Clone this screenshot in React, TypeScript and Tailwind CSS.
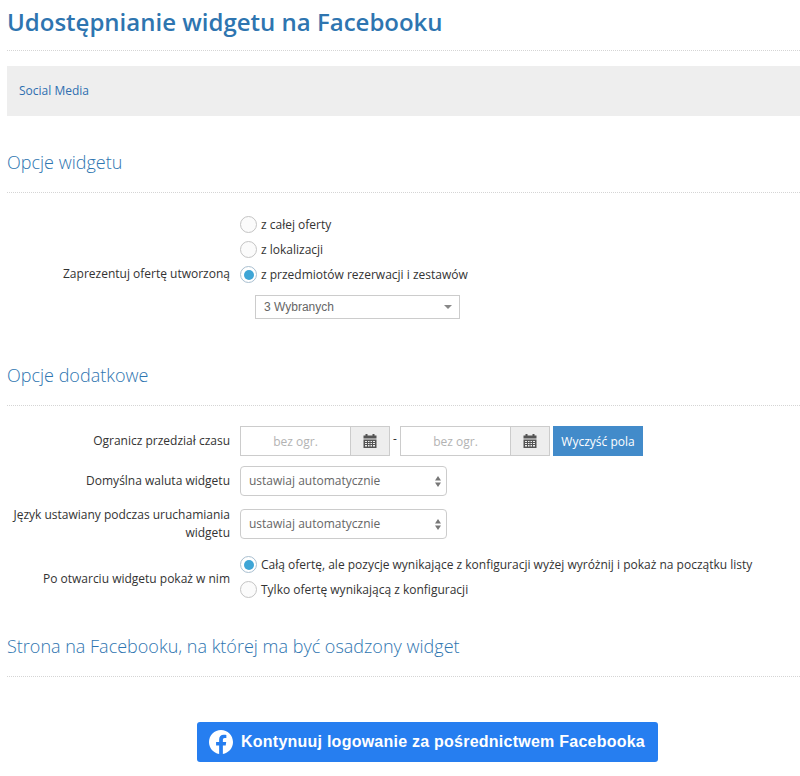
import { FC, ReactNode } from 'react';

const Radio: FC<{ checked?: boolean; label: string }> = ({ checked, label }) => (
  <div className="flex items-center h-[25px]">
    <span className={`w-[17px] h-[17px] rounded-full border flex items-center justify-center shrink-0 ${checked ? 'border-[#a9bfd0] bg-white' : 'border-[#c4c4c4] bg-[#fbfbfb]'}`}>
      {checked && <span className="w-[10px] h-[10px] rounded-full bg-[#3ea5d6]" />}
    </span>
    <span className="ml-[4px] text-[12px] text-[#333] whitespace-nowrap">{label}</span>
  </div>
);

const SectionTitle: FC<{ children: ReactNode }> = ({ children }) => (
  <div className="text-[18px] font-light leading-[24px] text-[#2e75b0] pb-[18px] border-b border-dotted border-[#d5d5d5]">
    {children}
  </div>
);

const CalendarIcon: FC = () => (
  <svg width="14" height="14" viewBox="0 0 14 14" fill="#555">
    <rect x="2.5" y="0" width="2" height="2.5" />
    <rect x="9.5" y="0" width="2" height="2.5" />
    <rect x="0.5" y="1.5" width="13" height="3" />
    <path fillRule="evenodd" d="M0.5 5.5h13V14h-13zM2 7v1h2V7zM5 7v1h1.5V7zM7.5 7v1H9V7zM10 7v1h2V7zM2 9v1h2V9zM5 9v1h1.5V9zM7.5 9v1H9V9zM10 9v1h2V9zM2 11v1.5h2V11zM5 11v1.5h1.5V11zM7.5 11v1.5H9V11zM10 11v1.5h2V11z" />
  </svg>
);

const DateField: FC = () => (
  <div className="flex w-[150px] h-[30px] border border-[#ccc]">
    <div className="flex-1 flex items-center justify-center pt-[2px] text-[12px] text-[#b3b3b3]">bez ogr.</div>
    <div className="w-[39px] bg-[#eee] border-l border-[#ccc] flex items-center justify-center">
      <CalendarIcon />
    </div>
  </div>
);

const NativeSelect: FC = () => (
  <div className="w-[207px] h-[30px] border border-[#ccc] rounded-[4px] pl-[8px] pr-[5px] flex items-center justify-between text-[12px] text-[#666]">
    <span>ustawiaj automatycznie</span>
    <svg width="6" height="11" viewBox="0 0 6 11" fill="#777">
      <path d="M3 0l3 4.5H0zM3 11L0 6.5h6z" />
    </svg>
  </div>
);

const Row: FC<{ label: ReactNode; children: ReactNode; className?: string; labelClass?: string }> = ({ label, children, className, labelClass }) => (
  <div className={`flex items-center ${className ?? ''}`}>
    <div className={`w-[223px] shrink-0 text-right text-[12px] leading-[18px] text-[#333] pl-[4px] ${labelClass ?? ''}`}>{label}</div>
    <div className="ml-[10px]">{children}</div>
  </div>
);

export default function App() {
  return (
    <div className="w-[800px] h-[776px] overflow-hidden bg-white pl-[7px] font-['Open_Sans',sans-serif]">
      <h1 className="h-[51px] pt-[6px] text-[24px] leading-[32px] font-semibold text-[#2e75b0] border-b border-dotted border-[#d5d5d5]">
        Udostępnianie widgetu na Facebooku
      </h1>

      <div className="mt-[15px] h-[50px] bg-[#eee] pl-[12px] flex items-center text-[12px] text-[#2e6fb0]">
        Social Media
      </div>

      <div className="mt-[34px]">
        <SectionTitle>Opcje widgetu</SectionTitle>
      </div>

      <div className="mt-[19px]">
        <Row label="Zaprezentuj ofertę utworzoną" className="!items-end" labelClass="pb-[4px]">
          <Radio label="z całej oferty" />
          <Radio label="z lokalizacji" />
          <Radio checked label="z przedmiotów rezerwacji i zestawów" />
        </Row>
        <div className="ml-[248px] mt-[8px] w-[205px] h-[24px] border border-[#ccc] pl-[8px] pr-[7px] flex items-center justify-between text-[12px] text-[#666] font-['Liberation_Sans',sans-serif]">
          <span>3 Wybranych</span>
          <span className="w-0 h-0 border-x-[4px] border-x-transparent border-t-[4px] border-t-[#888]" />
        </div>
      </div>

      <div className="mt-[44px]">
        <SectionTitle>Opcje dodatkowe</SectionTitle>
      </div>

      <Row label="Ogranicz przedział czasu" className="mt-[20px]">
        <div className="flex items-center">
          <DateField />
          <span className="w-[10px] text-center text-[12px] text-[#333] -mt-[4px]">-</span>
          <DateField />
          <button className="ml-[3px] w-[90px] h-[30px] pt-[1px] bg-[#428bca] text-white text-[12px] font-medium">Wyczyść pola</button>
        </div>
      </Row>

      <Row label="Domyślna waluta widgetu" className="mt-[10px]">
        <NativeSelect />
      </Row>

      <Row label={<>Język ustawiany podczas uruchamiania widgetu</>} className="mt-[10px]">
        <NativeSelect />
      </Row>

      <Row label="Po otwarciu widgetu pokaż w nim" className="mt-[10px]" labelClass="pt-[4px]">
        <Radio checked label="Całą ofertę, ale pozycje wynikające z konfiguracji wyżej wyróżnij i pokaż na początku listy" />
        <Radio label="Tylko ofertę wynikającą z konfiguracji" />
      </Row>

      <div className="mt-[32px]">
        <SectionTitle>Strona na Facebooku, na której ma być osadzony widget</SectionTitle>
      </div>

      <div className="mt-[45px] ml-[190px] w-[461px] h-[40px] rounded-[3px] bg-[#267ef0] flex items-center pl-[12px] text-white font-['Liberation_Sans',sans-serif]">
        <svg width="24" height="24" viewBox="0 0 24 24" fill="#fff">
          <path d="M24 12.07C24 5.4 18.63 0 12 0S0 5.4 0 12.07c0 6.03 4.39 11.02 10.13 11.93v-8.44H7.08v-3.49h3.05V9.41c0-3.02 1.79-4.69 4.53-4.69 1.31 0 2.69.24 2.69.24v2.97h-1.52c-1.49 0-1.96.93-1.96 1.89v2.25h3.33l-.53 3.49h-2.8V24C19.61 23.09 24 18.1 24 12.07z" />
        </svg>
        <span className="ml-[8px] text-[16px] font-bold tracking-[0.24px] whitespace-nowrap">Kontynuuj logowanie za pośrednictwem Facebooka</span>
      </div>
    </div>
  );
}
